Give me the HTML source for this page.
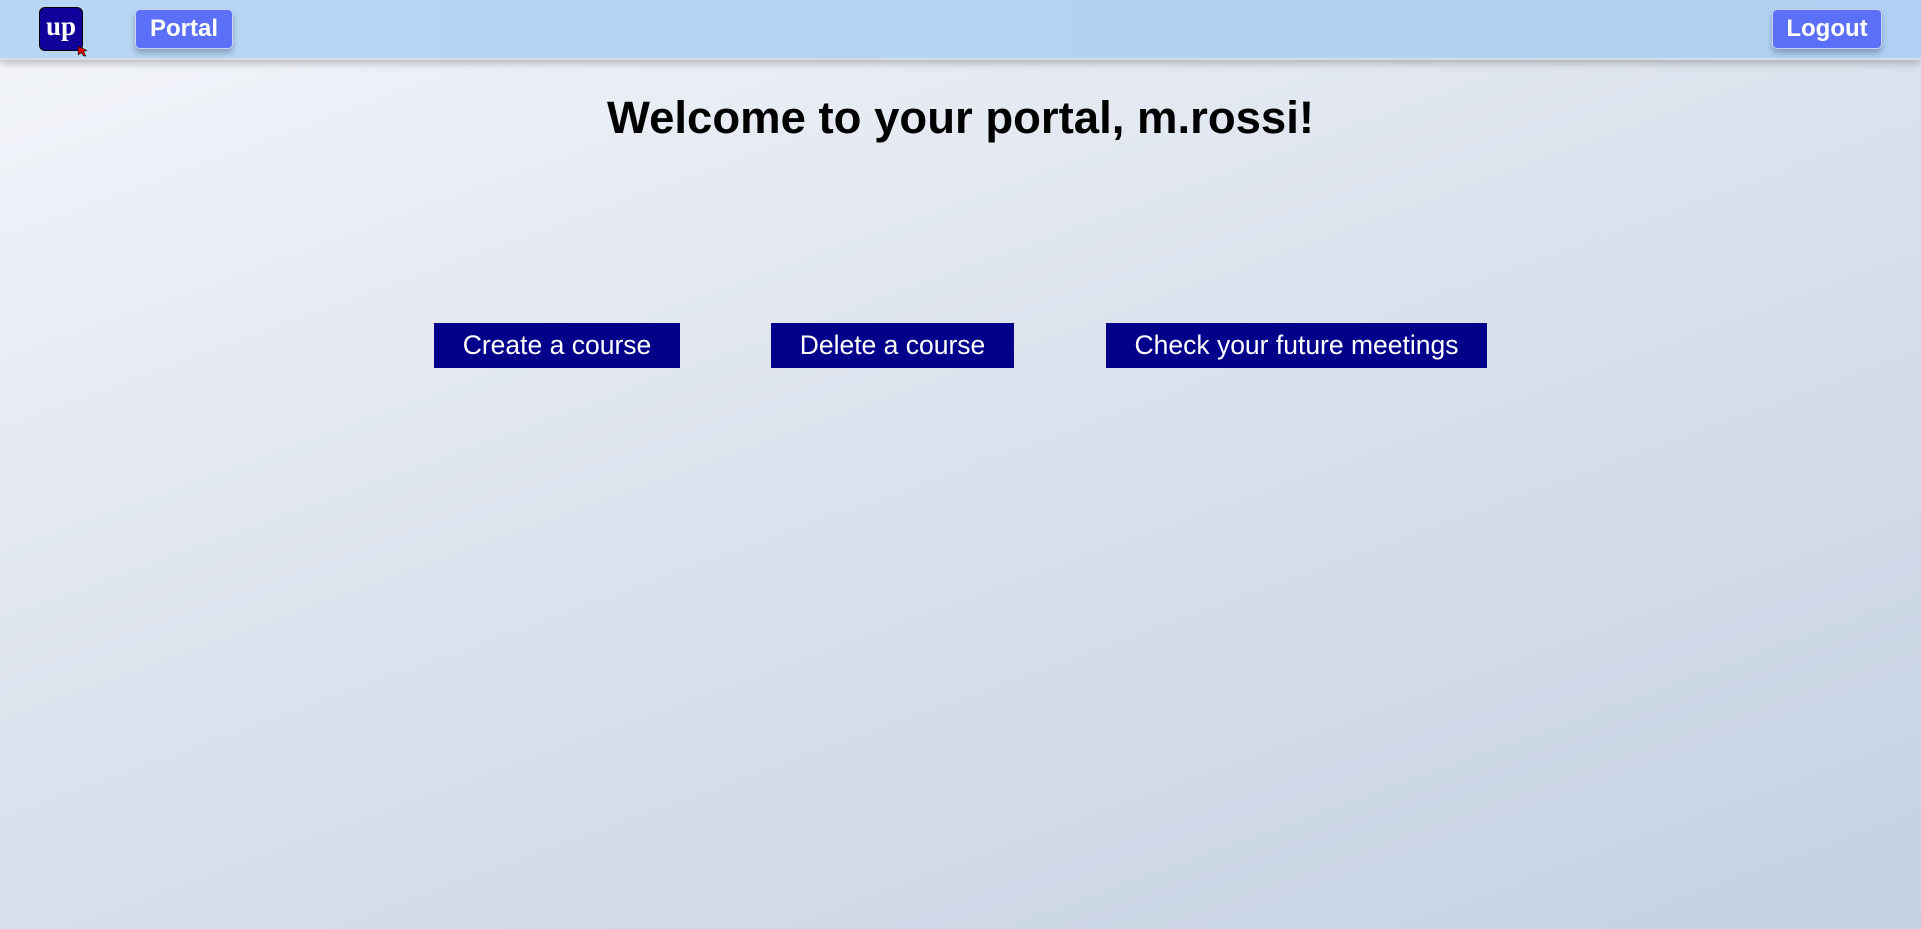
<!DOCTYPE html>
<html><head><meta charset="utf-8"><style>
html,body{margin:0;padding:0;width:1921px;height:929px;overflow:hidden}
body{background:linear-gradient(160deg,#f4f6fa 0%,#dde3ee 45%,#c4d1e3 100%);font-family:"Liberation Sans",Arial,sans-serif;position:relative}
.nav{position:absolute;left:0;top:0;width:1921px;height:58px;background:linear-gradient(90deg,#b7d6f3,#afd0f2);box-shadow:0 3px 8px rgba(0,0,0,0.25);border-bottom:2px solid #d8dde3}
.logo{position:absolute;left:39px;top:7px;width:44px;height:44px;background:#12009a;border:1px solid #000;border-radius:6px;box-sizing:border-box;color:#fff;font-family:"Liberation Serif",serif;font-weight:bold;font-size:27px;line-height:36px;text-align:center}
.nb{position:absolute;top:9px;height:40px;background:#5b6ff8;border:1px solid #c9d2f0;border-radius:5px;box-sizing:border-box;color:#fff;font-weight:bold;font-size:24px;line-height:38px;text-align:center;box-shadow:0 4px 6px rgba(0,0,40,0.25)}
h1{position:absolute;left:0;width:1921px;top:92px;margin:0;text-align:center;font-size:45.5px;font-weight:bold;color:#000}
.b{position:absolute;top:323px;height:45px;background:#02008a;color:#fff;font-size:26.5px;line-height:45px;text-align:center}
</style></head><body>
<div class="nav">
<div class="logo">up<svg style="position:absolute;right:-7px;bottom:-7px" width="13" height="13" viewBox="0 0 12 12"><path d="M2 2 L10 6 L7 7 L9 11 L7 11 L5 8 L2 10 Z" fill="#d00" stroke="#000" stroke-width="0.5"/></svg></div>
<div class="nb" style="left:135px;width:98px">Portal</div>
<div class="nb" style="left:1772px;width:110px">Logout</div>
</div>
<h1>Welcome to your portal, m.rossi!</h1>
<div class="b" style="left:434px;width:246px">Create a course</div>
<div class="b" style="left:771px;width:243px">Delete a course</div>
<div class="b" style="left:1106px;width:381px">Check your future meetings</div>
</body></html>
